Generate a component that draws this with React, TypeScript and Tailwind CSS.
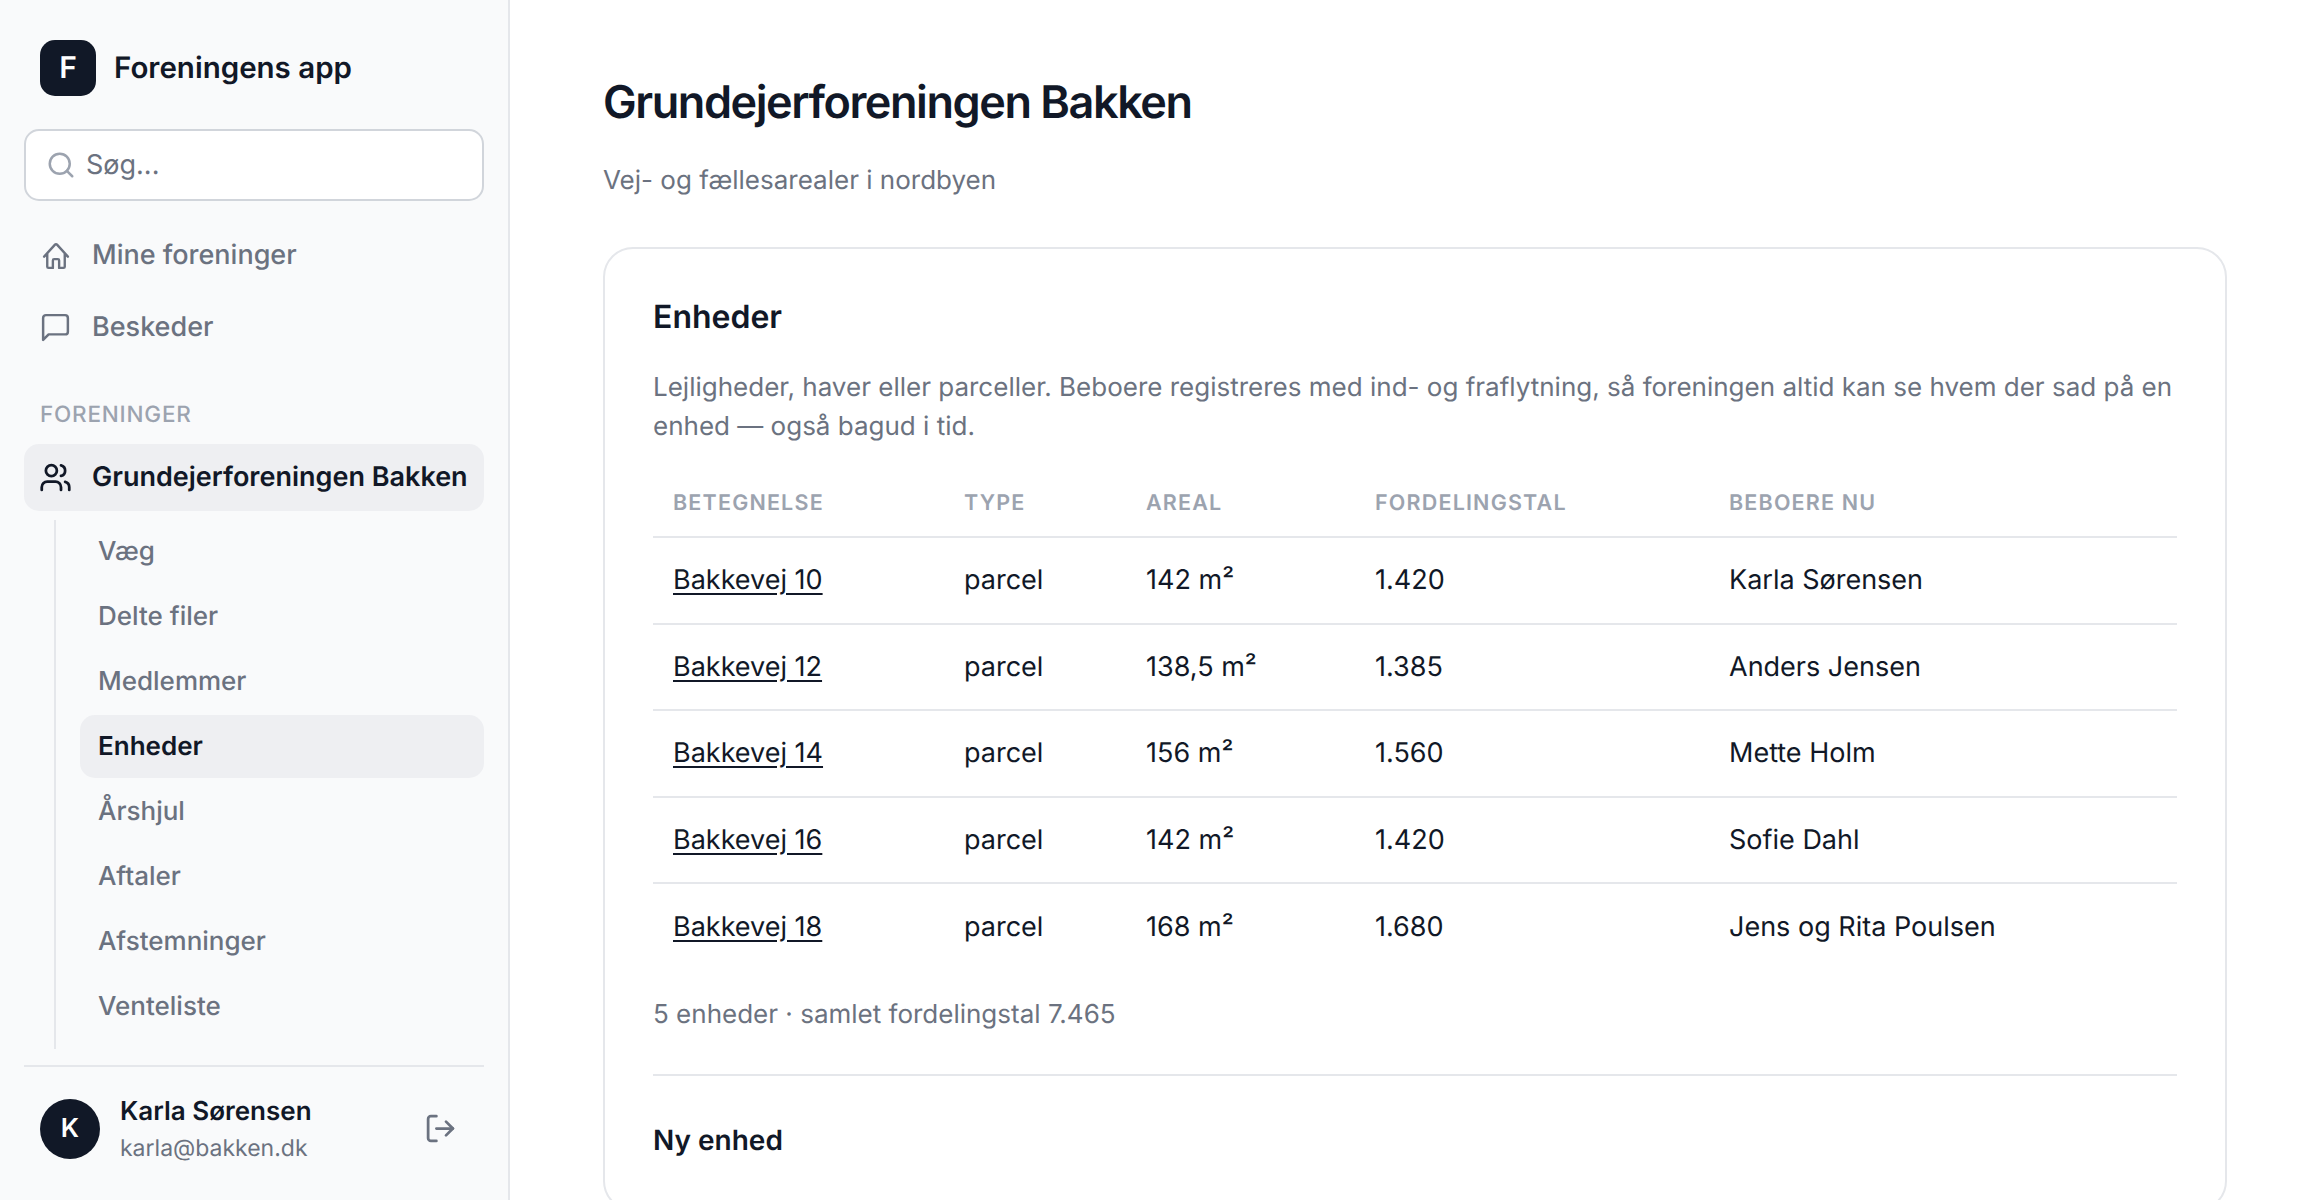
import { Users, Search, LogOut } from 'lucide-react'

const subItems = ['Væg', 'Delte filer', 'Medlemmer', 'Enheder', 'Årshjul', 'Aftaler', 'Afstemninger', 'Venteliste']

const units = [
  { name: 'Bakkevej 10', type: 'parcel', area: '142 m²', share: '1.420', people: 'Karla Sørensen' },
  { name: 'Bakkevej 12', type: 'parcel', area: '138,5 m²', share: '1.385', people: 'Anders Jensen' },
  { name: 'Bakkevej 14', type: 'parcel', area: '156 m²', share: '1.560', people: 'Mette Holm' },
  { name: 'Bakkevej 16', type: 'parcel', area: '142 m²', share: '1.420', people: 'Sofie Dahl' },
  { name: 'Bakkevej 18', type: 'parcel', area: '168 m²', share: '1.680', people: 'Jens og Rita Poulsen' },
]

const headers = ['Betegnelse', 'Type', 'Areal', 'Fordelingstal', 'Beboere nu']

function HomeIcon() {
  return (
    <svg viewBox="0 0 24 24" fill="none" stroke="currentColor" strokeWidth={1.9} strokeLinecap="round" strokeLinejoin="round" className="mx-[1.5px] h-[30px] w-[30px] shrink-0">
      <path d="M2.5 12.5 11.2 2.9c.4-.45 1.2-.45 1.6 0l8.7 9.6M5 10v10.5c0 .6.5 1 1 1h3.5v-6c0-.6.5-1 1-1h3c.5 0 1 .4 1 1v6H18c.5 0 1-.4 1-1V10" />
    </svg>
  )
}

function ChatIcon() {
  return (
    <svg viewBox="0 0 24 24" fill="none" stroke="currentColor" strokeWidth={1.8} strokeLinecap="round" strokeLinejoin="round" className="h-[33px] w-[33px] shrink-0">
      <path d="M21 15a2 2 0 0 1-2 2H7l-4 4V5a2 2 0 0 1 2-2h14a2 2 0 0 1 2 2z" />
    </svg>
  )
}

export default function App() {
  return (
    <div className="flex h-screen overflow-hidden bg-white font-['Inter',sans-serif] text-[#111827] [text-rendering:geometricPrecision]">
      {/* Sidebar */}
      <aside className="flex w-[510px] shrink-0 flex-col border-r-2 border-[#e5e7eb] bg-[#f9fafb] px-6 pb-0 pt-10">
        <div className="flex items-center gap-[18px] px-4">
          <div className="flex h-14 w-14 items-center justify-center rounded-[15px] bg-[#111827] text-[30px] font-semibold text-white">F</div>
          <span className="text-[29.5px] font-semibold">Foreningens app</span>
        </div>

        <div className="mt-[33px] flex h-[72px] items-center gap-[10px] rounded-[15px] border-2 border-[#d1d5db] bg-white px-[20px] text-[27px] text-[#6b7280]">
          <Search size={30} strokeWidth={2} className="shrink-0 text-[#9ca3af]" />
          <span>Søg...</span>
        </div>

        <nav className="mt-[20px] flex flex-col gap-[3px]">
          <div className="flex h-[69px] items-center gap-[20px] px-[15px] text-[27px] font-medium text-[#6b7280]">
            <HomeIcon />
            <span>Mine foreninger</span>
          </div>
          <div className="flex h-[69px] items-center gap-[20px] px-[15px] text-[27px] font-medium text-[#6b7280]">
            <ChatIcon />
            <span>Beskeder</span>
          </div>
        </nav>

        <div className="mt-[36px] px-4 text-[22.5px] font-medium uppercase tracking-[0.035em] text-[#9ca3af]">Foreninger</div>

        <div className="mt-[12px] flex h-[67px] items-center gap-[20px] rounded-[15px] bg-[#eeeff2] px-[15px] text-[27px] font-semibold">
          <Users size={33} strokeWidth={2} className="shrink-0" />
          <span className="whitespace-nowrap">Grundejerforeningen Bakken</span>
        </div>

        <div className="ml-[30px] mt-[9px] flex flex-col gap-[2px] border-l-2 border-[#e5e7eb] pb-[11px] pl-6">
          {subItems.map((item) => (
            <div
              key={item}
              className={
                item === 'Enheder'
                  ? 'flex h-[63px] items-center rounded-[15px] bg-[#eeeff2] px-[18px] text-[26px] font-semibold'
                  : 'flex h-[63px] items-center px-[18px] text-[26px] font-medium text-[#6b7280]'
              }
            >
              {item}
            </div>
          ))}
        </div>

        <div className="mt-4 flex items-center border-t-2 border-[#e5e7eb] px-4 pt-[25px]">
          <div className="flex h-[60px] w-[60px] shrink-0 items-center justify-center rounded-full bg-[#111827] text-[26px] font-semibold text-white">K</div>
          <div className="ml-5 flex-1 pt-[2px]">
            <div className="text-[26px] font-semibold leading-[36px]">Karla Sørensen</div>
            <div className="text-[23px] leading-[36px] text-[#6b7280]">karla@bakken.dk</div>
          </div>
          <LogOut size={33} strokeWidth={2} className="mr-[11px] shrink-0 text-[#6b7280]" />
        </div>
      </aside>

      {/* Main */}
      <main className="flex-1 overflow-hidden pl-[93px] pr-[93px] pt-[72px]">
        <h1 className="text-[45px] font-semibold leading-[60px] tracking-[-0.032em]">Grundejerforeningen Bakken</h1>
        <p className="mt-[31px] text-[26px] leading-[36px] text-[#6b7280]">Vej- og fællesarealer i nordbyen</p>

        <section className="mt-[48px] rounded-[30px] border-2 border-[#e5e7eb] bg-white p-12">
          <h2 className="-mt-[4px] text-[32px] font-semibold leading-[48px]">Enheder</h2>
          <p className="mt-[27px] text-[26px] leading-[39px] text-[#6b7280]">
            Lejligheder, haver eller parceller. Beboere registreres med ind- og fraflytning, så foreningen altid kan se hvem der sad på en enhed — også bagud i tid.
          </p>

          <table className="mt-[25px] w-full border-collapse text-left text-[27px]">
            <thead>
              <tr className="border-b-2 border-[#e5e7eb]">
                {headers.map((h, i) => (
                  <th
                    key={h}
                    className={`h-[66px] px-5 text-[21.5px] font-semibold uppercase tracking-[0.055em] text-[#9ca3af] ${['w-[291px]', 'w-[182px]', 'w-[229px]', 'w-[354px]', ''][i]}`}
                  >
                    {h}
                  </th>
                ))}
              </tr>
            </thead>
            <tbody>
              {units.map((u, i) => (
                <tr key={u.name} className={i < units.length - 1 ? 'h-[86.5px] border-b-2 border-[#e5e7eb]' : 'h-[86.5px]'}>
                  <td className="px-5 underline underline-offset-4">{u.name}</td>
                  <td className="px-5">{u.type}</td>
                  <td className="px-5">{u.area}</td>
                  <td className="px-5">{u.share}</td>
                  <td className="px-5">{u.people}</td>
                </tr>
              ))}
            </tbody>
          </table>

          <p className="mt-[25px] text-[26px] leading-[39px] text-[#6b7280]">5 enheder · samlet fordelingstal 7.465</p>
          <div className="mt-[40px] border-t-2 border-[#e5e7eb]" />
          <h3 className="mt-[43px] text-[28px] font-semibold leading-[42px]">Ny enhed</h3>
        </section>
      </main>
    </div>
  )
}
